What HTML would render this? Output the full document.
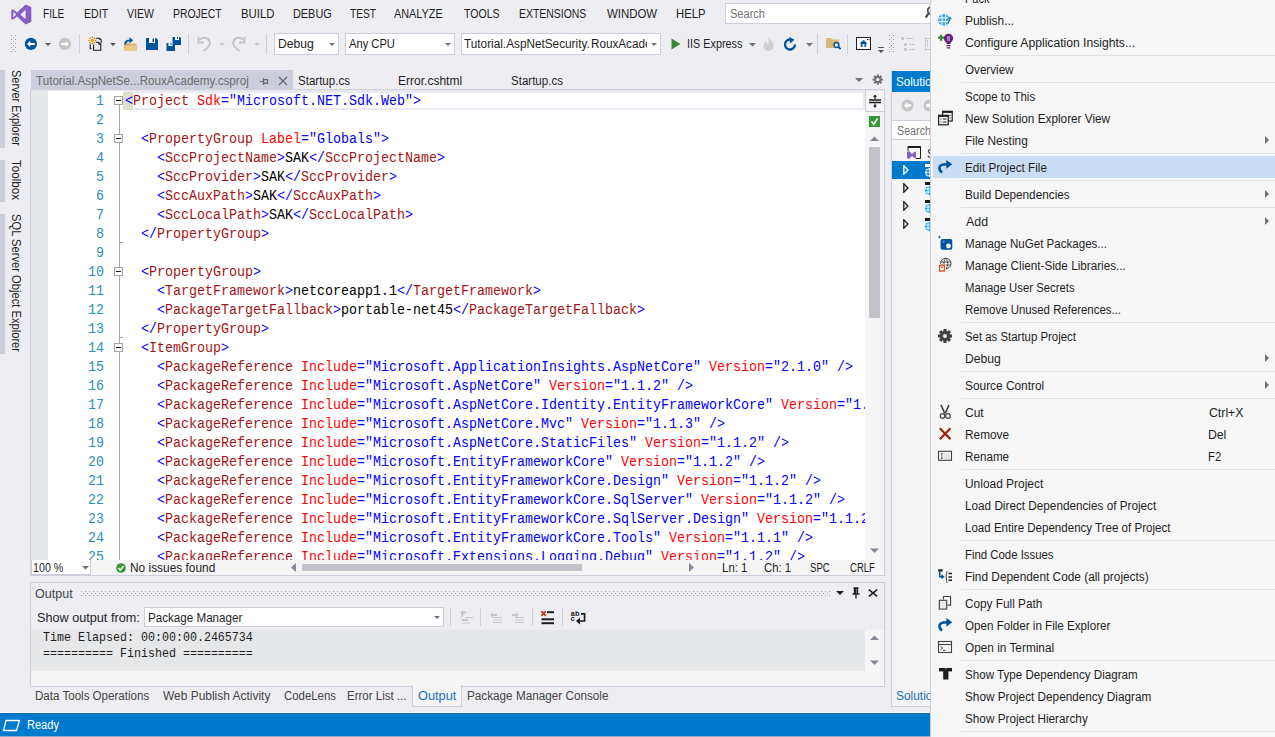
<!DOCTYPE html>
<html><head><meta charset="utf-8"><style>
html,body{margin:0;padding:0;}
body{width:1275px;height:737px;overflow:hidden;position:relative;background:#EEEEF2;font-family:"Liberation Sans",sans-serif;}
body div, body svg{position:absolute;}
.t{white-space:pre;line-height:20px;transform-origin:0 0;}
.m{white-space:pre;font-family:"Liberation Mono",monospace;font-size:13.333px;line-height:19px;transform-origin:0 13px;transform:scaleY(1.1);}
.mo{white-space:pre;font-family:"Liberation Mono",monospace;font-size:11.67px;line-height:15px;color:#1E1E1E;transform-origin:0 10px;transform:scaleY(1.08);}
</style></head><body>
<svg style="position:absolute;left:11px;top:4px;" width="21" height="21" viewBox="0 0 21 21"><path d="M14.6 0.6 L20.3 3.1 V17.9 L14.6 20.4 L6 12.6 L2 15.7 L0.3 14.9 V6.1 L2 5.3 L6 8.4 Z M14.6 5.8 L9.3 10.5 L14.6 15.2 Z M2.4 7.8 V13.2 L5.1 10.5 Z" fill="#865FC5" fill-rule="evenodd"/></svg>
<div class="t" style="left:42.67px;top:4px;font-size:12px;color:#1E1E1E;transform:scaleX(0.8389);">FILE</div>
<div class="t" style="left:83.53px;top:4px;font-size:12px;color:#1E1E1E;transform:scaleX(0.8821);">EDIT</div>
<div class="t" style="left:126.95px;top:4px;font-size:12px;color:#1E1E1E;transform:scaleX(0.8733);">VIEW</div>
<div class="t" style="left:173.15px;top:4px;font-size:12px;color:#1E1E1E;transform:scaleX(0.8677);">PROJECT</div>
<div class="t" style="left:240.77px;top:4px;font-size:12px;color:#1E1E1E;transform:scaleX(0.9472);">BUILD</div>
<div class="t" style="left:292.61px;top:4px;font-size:12px;color:#1E1E1E;transform:scaleX(0.9070);">DEBUG</div>
<div class="t" style="left:349.97px;top:4px;font-size:12px;color:#1E1E1E;transform:scaleX(0.8465);">TEST</div>
<div class="t" style="left:394.18px;top:4px;font-size:12px;color:#1E1E1E;transform:scaleX(0.9050);">ANALYZE</div>
<div class="t" style="left:464.36px;top:4px;font-size:12px;color:#1E1E1E;transform:scaleX(0.8782);">TOOLS</div>
<div class="t" style="left:518.94px;top:4px;font-size:12px;color:#1E1E1E;transform:scaleX(0.8705);">EXTENSIONS</div>
<div class="t" style="left:606.65px;top:4px;font-size:12px;color:#1E1E1E;transform:scaleX(0.9513);">WINDOW</div>
<div class="t" style="left:676.37px;top:4px;font-size:12px;color:#1E1E1E;transform:scaleX(0.9418);">HELP</div>
<div style="left:725px;top:3px;width:206px;height:21px;background:#FFFFFF;border:1px solid #CCCEDB;box-sizing:border-box"></div>
<div class="t" style="left:729.90px;top:4px;font-size:12px;color:#717171;transform:scaleX(0.9210);">Search</div>
<svg style="position:absolute;left:925px;top:6px;" width="10" height="14" viewBox="0 0 10 14"><circle cx="6" cy="4.5" r="3.3" fill="none" stroke="#424242" stroke-width="1.6"/><path d="M3.8 7 L0.8 11.5" stroke="#424242" stroke-width="2.2"/></svg>
<svg style="position:absolute;left:11px;top:35px;" width="5" height="17" viewBox="0 0 5 17"><rect x="0" y="0" width="1" height="1" fill="#A0A0A0"/><rect x="4" y="0" width="1" height="1" fill="#A0A0A0"/><rect x="0" y="4" width="1" height="1" fill="#A0A0A0"/><rect x="4" y="4" width="1" height="1" fill="#A0A0A0"/><rect x="0" y="8" width="1" height="1" fill="#A0A0A0"/><rect x="4" y="8" width="1" height="1" fill="#A0A0A0"/><rect x="0" y="12" width="1" height="1" fill="#A0A0A0"/><rect x="4" y="12" width="1" height="1" fill="#A0A0A0"/><rect x="0" y="16" width="1" height="1" fill="#A0A0A0"/><rect x="4" y="16" width="1" height="1" fill="#A0A0A0"/><rect x="2" y="2" width="1" height="1" fill="#A0A0A0"/><rect x="2" y="6" width="1" height="1" fill="#A0A0A0"/><rect x="2" y="10" width="1" height="1" fill="#A0A0A0"/><rect x="2" y="14" width="1" height="1" fill="#A0A0A0"/></svg>
<svg style="position:absolute;left:24px;top:37px;" width="14" height="14" viewBox="0 0 14 14"><circle cx="6.9" cy="6.9" r="6.1" fill="#00539C"/><path d="M3 6.9 L6.3 3.8 V5.9 H10.8 V7.9 H6.3 V10 Z" fill="#fff"/></svg>
<svg style="position:absolute;left:45px;top:43px;" width="6" height="4" viewBox="0 0 6 4"><path d="M0 0 H6 L3 3 Z" fill="#555"/></svg>
<svg style="position:absolute;left:58px;top:37px;" width="14" height="14" viewBox="0 0 14 14"><circle cx="7" cy="6.9" r="6.1" fill="#C5C5C5"/><path d="M10.9 6.9 L7.6 3.8 V5.9 H3.1 V7.9 H7.6 V10 Z" fill="#fff"/></svg>
<div style="left:79px;top:34px;width:1px;height:20px;background:#CCCEDB;"></div>
<svg style="position:absolute;left:86px;top:34px;" width="20" height="20" viewBox="0 0 20 20"><path d="M7.6 10.8 H12.6 L14.8 13 V16.3 H7.6 Z" fill="#E8E8E8"/><path d="M10 4.2 H13.5 L15.2 5.9 V9" fill="none" stroke="#1E1E1E" stroke-width="1.1"/><path d="M13.3 4 L15.4 6.1 H13.3 Z" fill="#1E1E1E"/><path d="M7.6 10.6 V16.3 H14.8 V10.5 L12.6 8.3 H10" fill="none" stroke="#1E1E1E" stroke-width="1.1"/><path d="M12.4 8.1 L15 10.7 H12.4 Z" fill="#1E1E1E"/><path d="M4.2 10.3 V14.8 H5.6" fill="none" stroke="#1E1E1E" stroke-width="1.1"/><circle cx="6.4" cy="6.4" r="3.6" fill="#FFE9A8" opacity="0.6"/><circle cx="9.60" cy="6.40" r="0.75" fill="#B08018"/><circle cx="8.66" cy="8.66" r="0.75" fill="#B08018"/><circle cx="6.40" cy="9.60" r="0.75" fill="#B08018"/><circle cx="4.14" cy="8.66" r="0.75" fill="#B08018"/><circle cx="3.20" cy="6.40" r="0.75" fill="#B08018"/><circle cx="4.14" cy="4.14" r="0.75" fill="#B08018"/><circle cx="6.40" cy="3.20" r="0.75" fill="#B08018"/><circle cx="8.66" cy="4.14" r="0.75" fill="#B08018"/><circle cx="6.4" cy="6.4" r="1.7" fill="#E0A800"/></svg>
<svg style="position:absolute;left:110px;top:43px;" width="6" height="4" viewBox="0 0 6 4"><path d="M0 0 H6 L3 3 Z" fill="#555"/></svg>
<svg style="position:absolute;left:123px;top:36px;" width="15" height="16" viewBox="0 0 15 16"><path d="M1 6.5 H5.5 L6.5 7.5 H13.5 V15 H1 Z" fill="#DCB67A"/><path d="M1 15 L2.5 10 H14.5 L13.5 15 Z" fill="#E8C98E"/><path d="M2.2 8.5 C2.2 5.5 3.5 4.3 7 4.3" fill="none" stroke="#00539C" stroke-width="1.8"/><path d="M6.5 1 L10 4.3 L6.5 7.6 Z" fill="#00539C"/></svg>
<svg style="position:absolute;left:146px;top:38px;" width="12" height="12" viewBox="0 0 12 12"><path d="M0 0 H10 L12 2 V12 H0 Z" fill="#00539C"/><rect x="3" y="0" width="6" height="5" fill="#fff"/><rect x="6.5" y="0.5" width="1.5" height="3.5" fill="#00539C"/></svg>
<svg style="position:absolute;left:166px;top:36px;" width="16" height="15" viewBox="0 0 16 15"><path d="M6.5 1 H14 L15 2 V9 H6.5 Z" fill="#00539C"/><rect x="9" y="1" width="4" height="3" fill="#fff"/><rect x="11" y="1" width="1" height="2" fill="#00539C"/><path d="M0.5 7 H9 V15 H0.5 Z" fill="#00539C" stroke="#EEEEF2" stroke-width="0"/><rect x="2.5" y="7" width="4" height="3" fill="#fff"/><rect x="4.5" y="7" width="1" height="2" fill="#00539C"/></svg>
<div style="left:188px;top:34px;width:1px;height:20px;background:#CCCEDB;"></div>
<svg style="position:absolute;left:196px;top:35px;" width="16" height="18" viewBox="0 0 16 18"><path d="M3.5 5 C6 1.8 12 2 13.6 6.5 C14.6 9.5 12.5 12.5 7.5 15.8" fill="none" stroke="#C5C5C5" stroke-width="2"/><path d="M2.5 1.8 V7.5 H8" fill="none" stroke="#C5C5C5" stroke-width="2"/></svg>
<svg style="position:absolute;left:219px;top:43px;" width="6" height="4" viewBox="0 0 6 4"><path d="M0 0 H6 L3 3 Z" fill="#C5C5C5"/></svg>
<svg style="position:absolute;left:231px;top:35px;" width="16" height="18" viewBox="0 0 16 18"><g transform="translate(16,0) scale(-1,1)"><path d="M3.5 5 C6 1.8 12 2 13.6 6.5 C14.6 9.5 12.5 12.5 7.5 15.8" fill="none" stroke="#C5C5C5" stroke-width="2"/><path d="M2.5 1.8 V7.5 H8" fill="none" stroke="#C5C5C5" stroke-width="2"/></g></svg>
<svg style="position:absolute;left:254px;top:43px;" width="6" height="4" viewBox="0 0 6 4"><path d="M0 0 H6 L3 3 Z" fill="#C5C5C5"/></svg>
<div style="left:266px;top:34px;width:1px;height:20px;background:#CCCEDB;"></div>
<div style="left:274px;top:33px;width:65px;height:22px;background:#FFFFFF;border:1px solid #CCCEDB;box-sizing:border-box"></div>
<svg style="position:absolute;left:329px;top:43px;" width="6" height="4" viewBox="0 0 6 4"><path d="M0 0 H6 L3 3 Z" fill="#717171"/></svg>
<div class="t" style="left:277.50px;top:33.6px;font-size:12px;color:#1E1E1E;transform:scaleX(1.0118);">Debug</div>
<div style="left:345px;top:33px;width:110px;height:22px;background:#FFFFFF;border:1px solid #CCCEDB;box-sizing:border-box"></div>
<svg style="position:absolute;left:445px;top:43px;" width="6" height="4" viewBox="0 0 6 4"><path d="M0 0 H6 L3 3 Z" fill="#717171"/></svg>
<div class="t" style="left:349.48px;top:33.6px;font-size:12px;color:#1E1E1E;transform:scaleX(0.9298);">Any CPU</div>
<div style="left:461px;top:33px;width:200px;height:22px;background:#FFFFFF;border:1px solid #CCCEDB;box-sizing:border-box"></div>
<svg style="position:absolute;left:651px;top:43px;" width="6" height="4" viewBox="0 0 6 4"><path d="M0 0 H6 L3 3 Z" fill="#717171"/></svg>
<div style="left:462px;top:34px;width:185px;height:20px;overflow:hidden">
<div class="t" style="left:2.44px;top:-0.40000000000000036px;font-size:12px;color:#1E1E1E;transform:scaleX(0.9819);">Tutorial.AspNetSecurity.</div>
<div class="t" style="left:129.44px;top:-0.40000000000000036px;font-size:12px;color:#1E1E1E;transform:scaleX(0.9737);">RouxAcademy</div>
</div>
<svg style="position:absolute;left:671px;top:38px;" width="10" height="12" viewBox="0 0 10 12"><path d="M0.5 0.5 L9.5 6 L0.5 11.5 Z" fill="#388A34"/></svg>
<div class="t" style="left:687.00px;top:33.8px;font-size:12px;color:#1E1E1E;transform:scaleX(0.9028);">IIS Express</div>
<svg style="position:absolute;left:749px;top:43px;" width="7" height="4" viewBox="0 0 7 4"><path d="M0 0 H7 L3.5 3.5 Z" fill="#717171"/></svg>
<svg style="position:absolute;left:763px;top:37px;" width="11" height="14" viewBox="0 0 11 14"><path d="M5.5 0 C9 4 11 6 10.5 9.5 C10 12.5 8 14 5.5 14 C3 14 0.5 12.5 0.5 9.5 C0.5 7 2 6 3 4 C3.5 6 4 7 5 7 C6 5 6 3 5.5 0 Z" fill="#CFCFCF"/></svg>
<svg style="position:absolute;left:783px;top:37px;" width="15" height="15" viewBox="0 0 15 15"><path d="M12 7.5 A5 5 0 1 1 8 2.6" fill="none" stroke="#00539C" stroke-width="2.3"/><path d="M6.5 0 L11.5 2.8 L7 6.5 Z" fill="#00539C"/></svg>
<svg style="position:absolute;left:806px;top:43px;" width="7" height="4" viewBox="0 0 7 4"><path d="M0 0 H7 L3.5 3.5 Z" fill="#717171"/></svg>
<div style="left:817px;top:34px;width:1px;height:20px;background:#CCCEDB;"></div>
<svg style="position:absolute;left:826px;top:37px;" width="15" height="13" viewBox="0 0 15 13"><path d="M0 1 H5 L6 2.5 H13 V11 H0 Z" fill="#DCB67A"/><circle cx="10.5" cy="8" r="2.4" fill="#fff" stroke="#00539C" stroke-width="1.5"/><path d="M12 9.5 L14.5 12" stroke="#00539C" stroke-width="1.8"/></svg>
<div style="left:847px;top:34px;width:1px;height:20px;background:#CCCEDB;"></div>
<svg style="position:absolute;left:856px;top:37px;" width="15" height="13" viewBox="0 0 15 13"><rect x="0.5" y="0.5" width="14" height="12" fill="#fff" stroke="#1E1E1E"/><path d="M7.5 3 L3.5 6.5 H4.8 V10 H10.2 V6.5 H11.5 Z" fill="#00539C"/><rect x="6.5" y="7" width="2" height="3" fill="#fff"/><rect x="11" y="2" width="1" height="1" fill="#1E1E1E"/><rect x="12.5" y="2" width="1" height="1" fill="#1E1E1E"/></svg>
<svg style="position:absolute;left:878px;top:47px;" width="7" height="8" viewBox="0 0 7 8"><rect x="0" y="0" width="6" height="1" fill="#555"/><path d="M0 3 H6 L3 6 Z" fill="#555"/></svg>
<svg style="position:absolute;left:889px;top:35px;" width="5" height="17" viewBox="0 0 5 17"><rect x="0" y="0" width="1" height="1" fill="#A0A0A0"/><rect x="4" y="0" width="1" height="1" fill="#A0A0A0"/><rect x="0" y="4" width="1" height="1" fill="#A0A0A0"/><rect x="4" y="4" width="1" height="1" fill="#A0A0A0"/><rect x="0" y="8" width="1" height="1" fill="#A0A0A0"/><rect x="4" y="8" width="1" height="1" fill="#A0A0A0"/><rect x="0" y="12" width="1" height="1" fill="#A0A0A0"/><rect x="4" y="12" width="1" height="1" fill="#A0A0A0"/><rect x="0" y="16" width="1" height="1" fill="#A0A0A0"/><rect x="4" y="16" width="1" height="1" fill="#A0A0A0"/><rect x="2" y="2" width="1" height="1" fill="#A0A0A0"/><rect x="2" y="6" width="1" height="1" fill="#A0A0A0"/><rect x="2" y="10" width="1" height="1" fill="#A0A0A0"/><rect x="2" y="14" width="1" height="1" fill="#A0A0A0"/></svg>
<svg style="position:absolute;left:901px;top:37px;" width="15" height="15" viewBox="0 0 15 15"><rect x="0" y="0" width="3" height="3" fill="#C8C8C8"/><rect x="5" y="1" width="7.5" height="1" fill="#C8C8C8"/><rect x="3" y="6" width="3" height="3" fill="#C8C8C8"/><rect x="8" y="7" width="6" height="1" fill="#C8C8C8"/><rect x="3" y="11" width="3" height="3" fill="#C8C8C8"/><rect x="8" y="12" width="6" height="1" fill="#C8C8C8"/></svg>
<div style="left:925px;top:38px;width:6px;height:12px;background:#EEEEF2;border:1px solid #C8C8C8;box-sizing:border-box"></div>
<svg style="position:absolute;left:927px;top:40px;" width="2" height="8" viewBox="0 0 2 8"><rect x="0" y="0" width="1" height="1" fill="#B0B0B0"/><rect x="0" y="2" width="1" height="1" fill="#B0B0B0"/><rect x="0" y="4" width="1" height="1" fill="#B0B0B0"/><rect x="0" y="6" width="1" height="1" fill="#B0B0B0"/></svg>
<div style="left:0px;top:70px;width:5px;height:78px;background:#CCCEDB;"></div>
<div class="t" style="left:0px;top:70px;font-size:12px;color:#1E1E1E;transform-origin:0 0;transform:translate(26px,0px) rotate(90deg) scaleX(0.9117)">Server Explorer</div>
<div style="left:0px;top:160px;width:5px;height:42px;background:#CCCEDB;"></div>
<div class="t" style="left:0px;top:160px;font-size:12px;color:#1E1E1E;transform-origin:0 0;transform:translate(26px,0px) rotate(90deg) scaleX(0.9671)">Toolbox</div>
<div style="left:0px;top:214px;width:5px;height:140px;background:#CCCEDB;"></div>
<div class="t" style="left:0px;top:214px;font-size:12px;color:#1E1E1E;transform-origin:0 0;transform:translate(26px,0px) rotate(90deg) scaleX(0.9309)">SQL Server Object Explorer</div>
<div style="left:31px;top:70px;width:262px;height:19px;background:#CCCEDB;"></div>
<div class="t" style="left:35.94px;top:71px;font-size:12px;color:#6D6D6D;transform:scaleX(0.9696);">Tutorial.AspNetSe...RouxAcademy.csproj</div>
<svg style="position:absolute;left:259px;top:77px;" width="10" height="9" viewBox="0 0 10 9"><path d="M0.8 4.5 H4.5" stroke="#6D6D6D" stroke-width="1.1"/><path d="M4.5 1 V8" stroke="#6D6D6D" stroke-width="1.3"/><path d="M4.5 2.6 H8.6 V6.4 H4.5" fill="none" stroke="#6D6D6D" stroke-width="1.1"/><rect x="4.5" y="5.6" width="4.6" height="1.4" fill="#6D6D6D"/></svg>
<svg style="position:absolute;left:278px;top:76px;" width="10" height="10" viewBox="0 0 10 10"><path d="M1 1 L9 9 M9 1 L1 9" stroke="#6D6D6D" stroke-width="1.5"/></svg>
<div class="t" style="left:297.98px;top:70.8px;font-size:12px;color:#1E1E1E;transform:scaleX(0.9614);">Startup.cs</div>
<div class="t" style="left:398.01px;top:70.8px;font-size:12px;color:#1E1E1E;transform:scaleX(1.0019);">Error.cshtml</div>
<div class="t" style="left:511.48px;top:70.8px;font-size:12px;color:#1E1E1E;transform:scaleX(0.9614);">Startup.cs</div>
<svg style="position:absolute;left:855px;top:78px;" width="8" height="5" viewBox="0 0 8 5"><path d="M0 0 H8 L4 4 Z" fill="#717171"/></svg>
<svg style="position:absolute;left:872px;top:74px;" width="12" height="12" viewBox="0 0 12 12"><g transform="translate(5.8,5.6)"><circle r="3.6" fill="#717171"/><rect x="-1" y="-5.2" width="2" height="2.5" fill="#717171" transform="rotate(0)"/><rect x="-1" y="-5.2" width="2" height="2.5" fill="#717171" transform="rotate(45)"/><rect x="-1" y="-5.2" width="2" height="2.5" fill="#717171" transform="rotate(90)"/><rect x="-1" y="-5.2" width="2" height="2.5" fill="#717171" transform="rotate(135)"/><rect x="-1" y="-5.2" width="2" height="2.5" fill="#717171" transform="rotate(180)"/><rect x="-1" y="-5.2" width="2" height="2.5" fill="#717171" transform="rotate(225)"/><rect x="-1" y="-5.2" width="2" height="2.5" fill="#717171" transform="rotate(270)"/><rect x="-1" y="-5.2" width="2" height="2.5" fill="#717171" transform="rotate(315)"/><circle r="1.7" fill="#EEEEF2"/></g></svg>
<div style="left:31px;top:89px;width:854px;height:1px;background:#CFD0DA;"></div>
<div style="left:31px;top:90px;width:854px;height:1px;background:#E4E5EC;"></div>
<div style="left:30px;top:89px;width:1px;height:487px;background:#CCCEDB;"></div>
<div style="left:884px;top:89px;width:1px;height:487px;background:#CCCEDB;"></div>
<div style="left:31px;top:91px;width:17px;height:469px;background:#E6E7E8;"></div>
<div style="left:48px;top:91px;width:817px;height:469px;background:#FFFFFF;"></div>
<div style="left:865px;top:91px;width:19px;height:469px;background:#F5F5F5;"></div>
<div style="left:865px;top:91px;width:1px;height:21px;background:#CCCEDB;"></div>
<div style="left:866px;top:111px;width:18px;height:1px;background:#CCCEDB;"></div>
<svg style="position:absolute;left:868px;top:94px;" width="14" height="14" viewBox="0 0 14 14"><path d="M1 6 H13 M1 8.5 H13" stroke="#1E1E1E" stroke-width="1.3"/><path d="M7 1 V5 M7 9.5 V13" stroke="#1E1E1E" stroke-width="1.2"/><path d="M5 3 L7 0.5 L9 3 Z M5 11.5 L7 14 L9 11.5 Z" fill="#1E1E1E"/></svg>
<svg style="position:absolute;left:869px;top:116px;" width="11" height="11" viewBox="0 0 11 11"><rect width="11" height="11" fill="#339933"/><path d="M2.5 5.5 L4.8 8.3 L8.5 2.5" fill="none" stroke="#fff" stroke-width="1.6"/></svg>
<svg style="position:absolute;left:870px;top:136px;" width="9" height="6" viewBox="0 0 9 6"><path d="M0 5 L4.5 0.5 L9 5 Z" fill="#868999"/></svg>
<div style="left:869px;top:147px;width:11px;height:171px;background:#C2C3C9;"></div>
<svg style="position:absolute;left:870px;top:548px;" width="9" height="6" viewBox="0 0 9 6"><path d="M0 0.5 L4.5 5 L9 0.5 Z" fill="#868999"/></svg>
<div style="left:123px;top:91px;width:742px;height:19px;background:transparent;border:2px solid #EAEAF2;box-sizing:border-box"></div>
<div style="left:123px;top:92px;width:10px;height:18px;background:#DBE0CC;"></div>
<div style="left:119px;top:105px;width:1px;height:455px;background:#A5A5A5;"></div>
<svg style="position:absolute;left:114px;top:96px;" width="9" height="9" viewBox="0 0 9 9"><rect x="0.5" y="0.5" width="8" height="8" fill="#fff" stroke="#A5A5A5"/><path d="M2 4.5 H7" stroke="#1E1E1E"/></svg>
<svg style="position:absolute;left:114px;top:134px;" width="9" height="9" viewBox="0 0 9 9"><rect x="0.5" y="0.5" width="8" height="8" fill="#fff" stroke="#A5A5A5"/><path d="M2 4.5 H7" stroke="#1E1E1E"/></svg>
<svg style="position:absolute;left:114px;top:267px;" width="9" height="9" viewBox="0 0 9 9"><rect x="0.5" y="0.5" width="8" height="8" fill="#fff" stroke="#A5A5A5"/><path d="M2 4.5 H7" stroke="#1E1E1E"/></svg>
<svg style="position:absolute;left:114px;top:343px;" width="9" height="9" viewBox="0 0 9 9"><rect x="0.5" y="0.5" width="8" height="8" fill="#fff" stroke="#A5A5A5"/><path d="M2 4.5 H7" stroke="#1E1E1E"/></svg>
<div style="left:120px;top:242px;width:3px;height:1px;background:#A5A5A5;"></div>
<div style="left:120px;top:337px;width:3px;height:1px;background:#A5A5A5;"></div>
<div style="left:31px;top:560px;width:853px;height:15px;background:#F5F5F5;"></div>
<div style="left:30px;top:575px;width:855px;height:1px;background:#CCCEDB;"></div>
<div style="left:31px;top:560px;width:60px;height:15px;background:#FFFFFF;border:1px solid #CCCEDB;border-top:none;box-sizing:border-box"></div>
<div class="t" style="left:32.68px;top:558px;font-size:12px;color:#1E1E1E;transform:scaleX(0.8934);">100 %</div>
<svg style="position:absolute;left:82px;top:566px;" width="7" height="4" viewBox="0 0 7 4"><path d="M0 0 H7 L3.5 3.5 Z" fill="#717171"/></svg>
<svg style="position:absolute;left:116px;top:563px;" width="10" height="10" viewBox="0 0 10 10"><circle cx="5" cy="5" r="4.8" fill="#339933"/><path d="M2.5 5 L4.3 7 L7.5 3" fill="none" stroke="#fff" stroke-width="1.5"/></svg>
<div class="t" style="left:130.02px;top:558px;font-size:12px;color:#1E1E1E;transform:scaleX(0.9906);">No issues found</div>
<svg style="position:absolute;left:291px;top:563px;" width="5" height="9" viewBox="0 0 5 9"><path d="M5 0 V9 L0 4.5 Z" fill="#868999"/></svg>
<div style="left:302px;top:564px;width:280px;height:7px;background:#C2C3C9;"></div>
<svg style="position:absolute;left:689px;top:563px;" width="5" height="9" viewBox="0 0 5 9"><path d="M0 0 V9 L5 4.5 Z" fill="#868999"/></svg>
<div class="t" style="left:722.06px;top:558px;font-size:12px;color:#1E1E1E;transform:scaleX(0.9554);">Ln: 1</div>
<div class="t" style="left:764.42px;top:558px;font-size:12px;color:#1E1E1E;transform:scaleX(0.9459);">Ch: 1</div>
<div class="t" style="left:809.56px;top:558px;font-size:12px;color:#1E1E1E;transform:scaleX(0.8026);">SPC</div>
<div class="t" style="left:849.52px;top:558px;font-size:12px;color:#1E1E1E;transform:scaleX(0.7935);">CRLF</div>
<div style="left:48px;top:91px;width:817px;height:469px;overflow:hidden">
<div class="m" style="left:48px;top:1px;color:#2B91AF">1</div>
<div class="m" style="left:77px;top:1px"><span style="color:#0000FF">&lt;</span><span style="color:#A31515">Project</span><span style="color:#000000"> </span><span style="color:#FF0000">Sdk</span><span style="color:#0000FF">=</span><span style="color:#0000FF">&quot;Microsoft.NET.Sdk.Web&quot;</span><span style="color:#0000FF">&gt;</span></div>
<div class="m" style="left:48px;top:20px;color:#2B91AF">2</div>
<div class="m" style="left:77px;top:20px"></div>
<div class="m" style="left:48px;top:39px;color:#2B91AF">3</div>
<div class="m" style="left:77px;top:39px"><span style="color:#000000">  </span><span style="color:#0000FF">&lt;</span><span style="color:#A31515">PropertyGroup</span><span style="color:#000000"> </span><span style="color:#FF0000">Label</span><span style="color:#0000FF">=</span><span style="color:#0000FF">&quot;Globals&quot;</span><span style="color:#0000FF">&gt;</span></div>
<div class="m" style="left:48px;top:58px;color:#2B91AF">4</div>
<div class="m" style="left:77px;top:58px"><span style="color:#000000">    </span><span style="color:#0000FF">&lt;</span><span style="color:#A31515">SccProjectName</span><span style="color:#0000FF">&gt;</span><span style="color:#000000">SAK</span><span style="color:#0000FF">&lt;/</span><span style="color:#A31515">SccProjectName</span><span style="color:#0000FF">&gt;</span></div>
<div class="m" style="left:48px;top:77px;color:#2B91AF">5</div>
<div class="m" style="left:77px;top:77px"><span style="color:#000000">    </span><span style="color:#0000FF">&lt;</span><span style="color:#A31515">SccProvider</span><span style="color:#0000FF">&gt;</span><span style="color:#000000">SAK</span><span style="color:#0000FF">&lt;/</span><span style="color:#A31515">SccProvider</span><span style="color:#0000FF">&gt;</span></div>
<div class="m" style="left:48px;top:96px;color:#2B91AF">6</div>
<div class="m" style="left:77px;top:96px"><span style="color:#000000">    </span><span style="color:#0000FF">&lt;</span><span style="color:#A31515">SccAuxPath</span><span style="color:#0000FF">&gt;</span><span style="color:#000000">SAK</span><span style="color:#0000FF">&lt;/</span><span style="color:#A31515">SccAuxPath</span><span style="color:#0000FF">&gt;</span></div>
<div class="m" style="left:48px;top:115px;color:#2B91AF">7</div>
<div class="m" style="left:77px;top:115px"><span style="color:#000000">    </span><span style="color:#0000FF">&lt;</span><span style="color:#A31515">SccLocalPath</span><span style="color:#0000FF">&gt;</span><span style="color:#000000">SAK</span><span style="color:#0000FF">&lt;/</span><span style="color:#A31515">SccLocalPath</span><span style="color:#0000FF">&gt;</span></div>
<div class="m" style="left:48px;top:134px;color:#2B91AF">8</div>
<div class="m" style="left:77px;top:134px"><span style="color:#000000">  </span><span style="color:#0000FF">&lt;/</span><span style="color:#A31515">PropertyGroup</span><span style="color:#0000FF">&gt;</span></div>
<div class="m" style="left:48px;top:153px;color:#2B91AF">9</div>
<div class="m" style="left:77px;top:153px"></div>
<div class="m" style="left:40px;top:172px;color:#2B91AF">10</div>
<div class="m" style="left:77px;top:172px"><span style="color:#000000">  </span><span style="color:#0000FF">&lt;</span><span style="color:#A31515">PropertyGroup</span><span style="color:#0000FF">&gt;</span></div>
<div class="m" style="left:40px;top:191px;color:#2B91AF">11</div>
<div class="m" style="left:77px;top:191px"><span style="color:#000000">    </span><span style="color:#0000FF">&lt;</span><span style="color:#A31515">TargetFramework</span><span style="color:#0000FF">&gt;</span><span style="color:#000000">netcoreapp1.1</span><span style="color:#0000FF">&lt;/</span><span style="color:#A31515">TargetFramework</span><span style="color:#0000FF">&gt;</span></div>
<div class="m" style="left:40px;top:210px;color:#2B91AF">12</div>
<div class="m" style="left:77px;top:210px"><span style="color:#000000">    </span><span style="color:#0000FF">&lt;</span><span style="color:#A31515">PackageTargetFallback</span><span style="color:#0000FF">&gt;</span><span style="color:#000000">portable-net45</span><span style="color:#0000FF">&lt;/</span><span style="color:#A31515">PackageTargetFallback</span><span style="color:#0000FF">&gt;</span></div>
<div class="m" style="left:40px;top:229px;color:#2B91AF">13</div>
<div class="m" style="left:77px;top:229px"><span style="color:#000000">  </span><span style="color:#0000FF">&lt;/</span><span style="color:#A31515">PropertyGroup</span><span style="color:#0000FF">&gt;</span></div>
<div class="m" style="left:40px;top:248px;color:#2B91AF">14</div>
<div class="m" style="left:77px;top:248px"><span style="color:#000000">  </span><span style="color:#0000FF">&lt;</span><span style="color:#A31515">ItemGroup</span><span style="color:#0000FF">&gt;</span></div>
<div class="m" style="left:40px;top:267px;color:#2B91AF">15</div>
<div class="m" style="left:77px;top:267px"><span style="color:#000000">    </span><span style="color:#0000FF">&lt;</span><span style="color:#A31515">PackageReference</span><span style="color:#000000"> </span><span style="color:#FF0000">Include</span><span style="color:#0000FF">=</span><span style="color:#0000FF">&quot;Microsoft.ApplicationInsights.AspNetCore&quot;</span><span style="color:#000000"> </span><span style="color:#FF0000">Version</span><span style="color:#0000FF">=</span><span style="color:#0000FF">&quot;2.1.0&quot;</span><span style="color:#000000"> </span><span style="color:#0000FF">/&gt;</span></div>
<div class="m" style="left:40px;top:286px;color:#2B91AF">16</div>
<div class="m" style="left:77px;top:286px"><span style="color:#000000">    </span><span style="color:#0000FF">&lt;</span><span style="color:#A31515">PackageReference</span><span style="color:#000000"> </span><span style="color:#FF0000">Include</span><span style="color:#0000FF">=</span><span style="color:#0000FF">&quot;Microsoft.AspNetCore&quot;</span><span style="color:#000000"> </span><span style="color:#FF0000">Version</span><span style="color:#0000FF">=</span><span style="color:#0000FF">&quot;1.1.2&quot;</span><span style="color:#000000"> </span><span style="color:#0000FF">/&gt;</span></div>
<div class="m" style="left:40px;top:305px;color:#2B91AF">17</div>
<div class="m" style="left:77px;top:305px"><span style="color:#000000">    </span><span style="color:#0000FF">&lt;</span><span style="color:#A31515">PackageReference</span><span style="color:#000000"> </span><span style="color:#FF0000">Include</span><span style="color:#0000FF">=</span><span style="color:#0000FF">&quot;Microsoft.AspNetCore.Identity.EntityFrameworkCore&quot;</span><span style="color:#000000"> </span><span style="color:#FF0000">Version</span><span style="color:#0000FF">=</span><span style="color:#0000FF">&quot;1.1.2&quot;</span><span style="color:#000000"> </span><span style="color:#0000FF">/&gt;</span></div>
<div class="m" style="left:40px;top:324px;color:#2B91AF">18</div>
<div class="m" style="left:77px;top:324px"><span style="color:#000000">    </span><span style="color:#0000FF">&lt;</span><span style="color:#A31515">PackageReference</span><span style="color:#000000"> </span><span style="color:#FF0000">Include</span><span style="color:#0000FF">=</span><span style="color:#0000FF">&quot;Microsoft.AspNetCore.Mvc&quot;</span><span style="color:#000000"> </span><span style="color:#FF0000">Version</span><span style="color:#0000FF">=</span><span style="color:#0000FF">&quot;1.1.3&quot;</span><span style="color:#000000"> </span><span style="color:#0000FF">/&gt;</span></div>
<div class="m" style="left:40px;top:343px;color:#2B91AF">19</div>
<div class="m" style="left:77px;top:343px"><span style="color:#000000">    </span><span style="color:#0000FF">&lt;</span><span style="color:#A31515">PackageReference</span><span style="color:#000000"> </span><span style="color:#FF0000">Include</span><span style="color:#0000FF">=</span><span style="color:#0000FF">&quot;Microsoft.AspNetCore.StaticFiles&quot;</span><span style="color:#000000"> </span><span style="color:#FF0000">Version</span><span style="color:#0000FF">=</span><span style="color:#0000FF">&quot;1.1.2&quot;</span><span style="color:#000000"> </span><span style="color:#0000FF">/&gt;</span></div>
<div class="m" style="left:40px;top:362px;color:#2B91AF">20</div>
<div class="m" style="left:77px;top:362px"><span style="color:#000000">    </span><span style="color:#0000FF">&lt;</span><span style="color:#A31515">PackageReference</span><span style="color:#000000"> </span><span style="color:#FF0000">Include</span><span style="color:#0000FF">=</span><span style="color:#0000FF">&quot;Microsoft.EntityFrameworkCore&quot;</span><span style="color:#000000"> </span><span style="color:#FF0000">Version</span><span style="color:#0000FF">=</span><span style="color:#0000FF">&quot;1.1.2&quot;</span><span style="color:#000000"> </span><span style="color:#0000FF">/&gt;</span></div>
<div class="m" style="left:40px;top:381px;color:#2B91AF">21</div>
<div class="m" style="left:77px;top:381px"><span style="color:#000000">    </span><span style="color:#0000FF">&lt;</span><span style="color:#A31515">PackageReference</span><span style="color:#000000"> </span><span style="color:#FF0000">Include</span><span style="color:#0000FF">=</span><span style="color:#0000FF">&quot;Microsoft.EntityFrameworkCore.Design&quot;</span><span style="color:#000000"> </span><span style="color:#FF0000">Version</span><span style="color:#0000FF">=</span><span style="color:#0000FF">&quot;1.1.2&quot;</span><span style="color:#000000"> </span><span style="color:#0000FF">/&gt;</span></div>
<div class="m" style="left:40px;top:400px;color:#2B91AF">22</div>
<div class="m" style="left:77px;top:400px"><span style="color:#000000">    </span><span style="color:#0000FF">&lt;</span><span style="color:#A31515">PackageReference</span><span style="color:#000000"> </span><span style="color:#FF0000">Include</span><span style="color:#0000FF">=</span><span style="color:#0000FF">&quot;Microsoft.EntityFrameworkCore.SqlServer&quot;</span><span style="color:#000000"> </span><span style="color:#FF0000">Version</span><span style="color:#0000FF">=</span><span style="color:#0000FF">&quot;1.1.2&quot;</span><span style="color:#000000"> </span><span style="color:#0000FF">/&gt;</span></div>
<div class="m" style="left:40px;top:419px;color:#2B91AF">23</div>
<div class="m" style="left:77px;top:419px"><span style="color:#000000">    </span><span style="color:#0000FF">&lt;</span><span style="color:#A31515">PackageReference</span><span style="color:#000000"> </span><span style="color:#FF0000">Include</span><span style="color:#0000FF">=</span><span style="color:#0000FF">&quot;Microsoft.EntityFrameworkCore.SqlServer.Design&quot;</span><span style="color:#000000"> </span><span style="color:#FF0000">Version</span><span style="color:#0000FF">=</span><span style="color:#0000FF">&quot;1.1.2&quot;</span><span style="color:#000000"> </span><span style="color:#0000FF">/&gt;</span></div>
<div class="m" style="left:40px;top:438px;color:#2B91AF">24</div>
<div class="m" style="left:77px;top:438px"><span style="color:#000000">    </span><span style="color:#0000FF">&lt;</span><span style="color:#A31515">PackageReference</span><span style="color:#000000"> </span><span style="color:#FF0000">Include</span><span style="color:#0000FF">=</span><span style="color:#0000FF">&quot;Microsoft.EntityFrameworkCore.Tools&quot;</span><span style="color:#000000"> </span><span style="color:#FF0000">Version</span><span style="color:#0000FF">=</span><span style="color:#0000FF">&quot;1.1.1&quot;</span><span style="color:#000000"> </span><span style="color:#0000FF">/&gt;</span></div>
<div class="m" style="left:40px;top:457px;color:#2B91AF">25</div>
<div class="m" style="left:77px;top:457px"><span style="color:#000000">    </span><span style="color:#0000FF">&lt;</span><span style="color:#A31515">PackageReference</span><span style="color:#000000"> </span><span style="color:#FF0000">Include</span><span style="color:#0000FF">=</span><span style="color:#0000FF">&quot;Microsoft.Extensions.Logging.Debug&quot;</span><span style="color:#000000"> </span><span style="color:#FF0000">Version</span><span style="color:#0000FF">=</span><span style="color:#0000FF">&quot;1.1.2&quot;</span><span style="color:#000000"> </span><span style="color:#0000FF">/&gt;</span></div>
</div>
<div style="left:30px;top:582px;width:855px;height:105px;background:#F5F5F5;border:1px solid #CCCEDB;box-sizing:border-box"></div>
<div style="left:31px;top:583px;width:853px;height:47px;background:#EEEEF2;"></div>
<div class="t" style="left:35.41px;top:584px;font-size:12px;color:#444444;transform:scaleX(1.0462);">Output</div>
<svg style="position:absolute;left:81px;top:591px;" width="749" height="5" viewBox="0 0 749 5"><defs><pattern id="dp" width="4" height="4" patternUnits="userSpaceOnUse"><rect x="0" y="0" width="1" height="1" fill="#A8A8B0"/><rect x="2" y="2" width="1" height="1" fill="#A8A8B0"/></pattern></defs><rect width="749" height="5" fill="url(#dp)"/></svg>
<svg style="position:absolute;left:836px;top:591px;" width="8" height="5" viewBox="0 0 8 5"><path d="M0 0 H8 L4 4 Z" fill="#1E1E1E"/></svg>
<svg style="position:absolute;left:852px;top:587px;" width="8" height="12" viewBox="0 0 8 12"><path d="M1.5 1 H6.5 M2.5 1 V7 H5.5 V1 M0.5 7 H7.5 M4 7 V11.5" fill="none" stroke="#1E1E1E" stroke-width="1.3"/><rect x="2.5" y="1" width="2" height="6" fill="#1E1E1E"/></svg>
<svg style="position:absolute;left:868px;top:589px;" width="10" height="8" viewBox="0 0 10 8"><path d="M0.8 0.6 L9.2 7.4 M9.2 0.6 L0.8 7.4" stroke="#1E1E1E" stroke-width="1.5"/></svg>
<div class="t" style="left:37.43px;top:607.5px;font-size:12px;color:#1E1E1E;transform:scaleX(1.0549);">Show output from:</div>
<div style="left:144px;top:607px;width:300px;height:20px;background:#FFFFFF;border:1px solid #CCCEDB;box-sizing:border-box"></div>
<svg style="position:absolute;left:434px;top:616px;" width="6" height="4" viewBox="0 0 6 4"><path d="M0 0 H6 L3 3 Z" fill="#717171"/></svg>
<div class="t" style="left:147.65px;top:608px;font-size:12px;color:#1E1E1E;transform:scaleX(0.9687);">Package Manager</div>
<div style="left:450px;top:608px;width:1px;height:18px;background:#CCCEDB;"></div>
<svg style="position:absolute;left:459px;top:610px;" width="15" height="14" viewBox="0 0 15 14"><path d="M3 7 C3 3 5 2 7 2.5" fill="none" stroke="#C5C5C5" stroke-width="1.6"/><path d="M4 0 V5 L1 2.5 Z" fill="#C5C5C5"/><rect x="6" y="7" width="8" height="1" fill="#C5C5C5"/><rect x="3" y="9" width="6" height="2" fill="#C5C5C5"/><rect x="3" y="12.5" width="8" height="1" fill="#C5C5C5"/></svg>
<div style="left:480px;top:608px;width:1px;height:18px;background:#CCCEDB;"></div>
<svg style="position:absolute;left:490px;top:612px;" width="12" height="11" viewBox="0 0 12 11"><path d="M0 3 L3 0 V2 H7 V4 H3 V6 Z" fill="#C5C5C5"/><rect x="3" y="5" width="9" height="1" fill="#C5C5C5"/><rect x="3" y="7.5" width="9" height="1" fill="#C5C5C5"/><rect x="3" y="10" width="9" height="1" fill="#C5C5C5"/></svg>
<svg style="position:absolute;left:512px;top:612px;" width="12" height="11" viewBox="0 0 12 11"><path d="M7 3 L4 0 V2 H0 V4 H4 V6 Z" fill="#C5C5C5"/><rect x="3" y="5" width="9" height="1" fill="#C5C5C5"/><rect x="3" y="7.5" width="9" height="1" fill="#C5C5C5"/><rect x="3" y="10" width="9" height="1" fill="#C5C5C5"/></svg>
<div style="left:532px;top:608px;width:1px;height:18px;background:#CCCEDB;"></div>
<svg style="position:absolute;left:540px;top:610px;" width="15" height="15" viewBox="0 0 15 15"><path d="M1.2 1.2 L5.8 5.8 M5.8 1.2 L1.2 5.8" stroke="#C8321E" stroke-width="1.7"/><rect x="7" y="1.2" width="7" height="2" fill="#1E1E1E"/><rect x="1.5" y="8.3" width="12.5" height="2" fill="#1E1E1E"/><rect x="1.5" y="12.2" width="12.5" height="2" fill="#1E1E1E"/></svg>
<div style="left:562px;top:608px;width:1px;height:18px;background:#CCCEDB;"></div>
<svg style="position:absolute;left:570px;top:610px;" width="17" height="15" viewBox="0 0 17 15"><text x="0.5" y="6.3" font-family="Liberation Mono" font-weight="bold" font-size="7.5" fill="#1E1E1E">ab</text><text x="0.5" y="10.8" font-family="Liberation Mono" font-weight="bold" font-size="7.5" fill="#1E1E1E">c</text><path d="M11 3.8 H14.6 V11 H8.5" fill="none" stroke="#1E1E1E" stroke-width="1.7"/><path d="M10 7.5 L6 11 L10 14.5 Z" fill="#1E1E1E"/></svg>
<div style="left:31px;top:630px;width:834px;height:41px;background:#E6E7E8;"></div>
<div class="mo" style="left:43px;top:631px">Time Elapsed: 00:00:00.2465734
========== Finished ==========</div>
<svg style="position:absolute;left:870px;top:635px;" width="9" height="6" viewBox="0 0 9 6"><path d="M0 5 L4.5 0.5 L9 5 Z" fill="#868999"/></svg>
<svg style="position:absolute;left:870px;top:660px;" width="9" height="6" viewBox="0 0 9 6"><path d="M0 0.5 L4.5 5 L9 0.5 Z" fill="#868999"/></svg>
<div class="t" style="left:35.45px;top:686px;font-size:12px;color:#444444;transform:scaleX(0.9634);">Data Tools Operations</div>
<div class="t" style="left:163.35px;top:686px;font-size:12px;color:#444444;transform:scaleX(0.9961);">Web Publish Activity</div>
<div class="t" style="left:284.32px;top:686px;font-size:12px;color:#444444;transform:scaleX(0.9503);">CodeLens</div>
<div class="t" style="left:347.46px;top:686px;font-size:12px;color:#444444;transform:scaleX(0.9578);">Error List ...</div>
<div style="left:412px;top:685px;width:50px;height:22px;background:#F5F5F5;border:1px solid #CCCEDB;border-top:none;box-sizing:border-box"></div>
<div class="t" style="left:417.59px;top:686px;font-size:12px;color:#1C6FB5;transform:scaleX(1.0660);">Output</div>
<div class="t" style="left:467.44px;top:686px;font-size:12px;color:#444444;transform:scaleX(0.9774);">Package Manager Console</div>
<div style="left:0px;top:713px;width:930px;height:24px;background:#007ACC;"></div>
<div style="left:0px;top:713px;width:930px;height:1px;background:#1A6CAA;"></div>
<div style="left:0px;top:712px;width:930px;height:1px;background:#F2FAFF;"></div>
<svg style="position:absolute;left:2px;top:719px;" width="19" height="13" viewBox="0 0 19 13"><path d="M4 1.5 H17.5 L14.5 11.5 H1.5 Z" fill="none" stroke="#fff" stroke-width="1.3"/></svg>
<div class="t" style="left:26.89px;top:715px;font-size:12px;color:#FFFFFF;transform:scaleX(0.9204);">Ready</div>
<div style="left:0px;top:736px;width:930px;height:1px;background:#96AACC;"></div>
<div style="left:891px;top:71px;width:40px;height:636px;background:#F5F5F5;border-left:1px solid #CCCEDB;border-bottom:1px solid #CCCEDB;box-sizing:border-box"></div>
<div style="left:892px;top:71px;width:39px;height:21px;background:#007ACC;"></div>
<div class="t" style="left:895.97px;top:72px;font-size:12px;color:#FFFFFF;transform:scaleX(0.9676);">Solution Explorer</div>
<div style="left:892px;top:92px;width:39px;height:28px;background:#EEEEF2;"></div>
<svg style="position:absolute;left:901px;top:99px;" width="13" height="13" viewBox="0 0 13 13"><circle cx="6.5" cy="6.5" r="6" fill="#C5C5C5"/><path d="M3 6.5 L6.5 3 V5.3 H10 V7.7 H6.5 V10 Z" fill="#fff"/></svg>
<svg style="position:absolute;left:923px;top:99px;" width="13" height="13" viewBox="0 0 13 13"><circle cx="6.5" cy="6.5" r="6" fill="#C5C5C5"/><path d="M10 6.5 L6.5 3 V5.3 H3 V7.7 H6.5 V10 Z" fill="#fff"/></svg>
<div style="left:892px;top:120px;width:39px;height:20px;background:#FFFFFF;border-bottom:1px solid #CCCEDB;border-top:1px solid #CCCEDB;box-sizing:border-box"></div>
<div class="t" style="left:896.91px;top:121px;font-size:12px;color:#717171;transform:scaleX(0.8940);">Search Solution Explorer</div>
<svg style="position:absolute;left:907px;top:146px;" width="15" height="13" viewBox="0 0 15 13"><path d="M1 0.5 H13.5 V12.5 H9 M1 0.5 V5" fill="none" stroke="#1E1E1E" stroke-width="1"/><rect x="1" y="0.5" width="12.5" height="1.5" fill="#1E1E1E"/><path d="M0 6 L2 5 L5 8 L8 5.5 L9 6 V12 L8 12.5 L5 10 L2 13 L0 12 Z" fill="#865FC5"/></svg>
<div class="t" style="left:926.98px;top:143.5px;font-size:12px;color:#1E1E1E;transform:scaleX(0.9515);">Solution</div>
<div style="left:892px;top:161px;width:39px;height:18px;background:#007ACC;"></div>
<svg style="position:absolute;left:903px;top:165px;" width="6" height="10" viewBox="0 0 6 10"><path d="M0.8 0.8 L5 5 L0.8 9.2 Z" fill="none" stroke="#FFFFFF" stroke-width="1.3"/></svg>
<svg style="position:absolute;left:924px;top:163px;" width="8" height="15" viewBox="0 0 8 15"><rect x="1" y="1" width="7" height="3" fill="#FFFFFF"/><circle cx="5.5" cy="9.5" r="4.6" fill="#FFFFFF"/><path d="M1 8 H10 M1 11 H10 M4 5 V14 M7 5 V14" stroke="#007ACC" stroke-width="0.9"/></svg>
<svg style="position:absolute;left:903px;top:183px;" width="6" height="10" viewBox="0 0 6 10"><path d="M0.8 0.8 L5 5 L0.8 9.2 Z" fill="none" stroke="#1E1E1E" stroke-width="1.3"/></svg>
<svg style="position:absolute;left:924px;top:181px;" width="8" height="15" viewBox="0 0 8 15"><rect x="1" y="1" width="7" height="3" fill="#1E1E1E"/><circle cx="5.5" cy="9.5" r="4.6" fill="#1BA1E2"/><path d="M1 8 H10 M1 11 H10 M4 5 V14 M7 5 V14" stroke="#FFFFFF" stroke-width="0.9"/></svg>
<svg style="position:absolute;left:903px;top:201px;" width="6" height="10" viewBox="0 0 6 10"><path d="M0.8 0.8 L5 5 L0.8 9.2 Z" fill="none" stroke="#1E1E1E" stroke-width="1.3"/></svg>
<svg style="position:absolute;left:924px;top:199px;" width="8" height="15" viewBox="0 0 8 15"><rect x="1" y="1" width="7" height="3" fill="#1E1E1E"/><circle cx="5.5" cy="9.5" r="4.6" fill="#1BA1E2"/><path d="M1 8 H10 M1 11 H10 M4 5 V14 M7 5 V14" stroke="#FFFFFF" stroke-width="0.9"/></svg>
<svg style="position:absolute;left:903px;top:219px;" width="6" height="10" viewBox="0 0 6 10"><path d="M0.8 0.8 L5 5 L0.8 9.2 Z" fill="none" stroke="#1E1E1E" stroke-width="1.3"/></svg>
<svg style="position:absolute;left:924px;top:217px;" width="8" height="15" viewBox="0 0 8 15"><rect x="1" y="1" width="7" height="3" fill="#1E1E1E"/><circle cx="5.5" cy="9.5" r="4.6" fill="#1BA1E2"/><path d="M1 8 H10 M1 11 H10 M4 5 V14 M7 5 V14" stroke="#FFFFFF" stroke-width="0.9"/></svg>
<div class="t" style="left:896.46px;top:686px;font-size:12px;color:#1C6FB5;transform:scaleX(0.9930);">Solution Explorer</div>
<div style="left:930px;top:0px;width:345px;height:737px;background:#F6F6F6;border-left:1px solid #CCCEDB;box-sizing:border-box"></div>
<div class="t" style="left:964.70px;top:-11px;font-size:12px;color:#1E1E1E;transform:scaleX(0.9140);">Pack</div>
<div class="t" style="left:964.62px;top:11px;font-size:12px;color:#1E1E1E;transform:scaleX(0.9941);">Publish...</div>
<svg style="position:absolute;left:932px;top:9px;" width="28" height="22" viewBox="0 0 28 22"><circle cx="11.8" cy="10.8" r="5.9" fill="#3DA6E4"/><path d="M6 9 H17.6 M6 12.6 H17.6" stroke="#fff" stroke-width="1"/><path d="M10 5 V16.6 M13.6 5 V16.6" stroke="#fff" stroke-width="1"/><path d="M16.2 14 C17.5 12.5 18 10.5 17.8 9" fill="none" stroke="#F6F6F6" stroke-width="3"/><path d="M15.8 14.5 C17 13 17.6 11.5 17.6 9.5" fill="none" stroke="#1E7EC8" stroke-width="1.6"/><path d="M15.3 10.3 L17.7 7.2 L20 10.3 Z" fill="#1E7EC8"/></svg>
<div class="t" style="left:964.98px;top:33px;font-size:12px;color:#1E1E1E;transform:scaleX(1.0116);">Configure Application Insights...</div>
<svg style="position:absolute;left:932px;top:31px;" width="28" height="22" viewBox="0 0 28 22"><path d="M6 6.7 H12 M9 3.7 V9.7" stroke="#388A34" stroke-width="2.2"/><circle cx="16.5" cy="7.3" r="4.6" fill="#68217A"/><path d="M13.5 9 L14.8 13 H18.2 L19.5 9 Z" fill="#68217A"/><path d="M14.5 14.6 H18.5 M14.8 16.8 H18.2" stroke="#68217A" stroke-width="1.3"/><path d="M14.8 6 H18.2 M15.8 6 V10 M17.2 6 V10" stroke="#D8B8E8" stroke-width="0.9"/></svg>
<div style="left:961px;top:55px;width:314px;height:1px;background:#E0E3E6;"></div>
<div class="t" style="left:965.05px;top:60px;font-size:12px;color:#1E1E1E;transform:scaleX(0.9703);">Overview</div>
<div style="left:961px;top:82px;width:314px;height:1px;background:#E0E3E6;"></div>
<div class="t" style="left:965.08px;top:87px;font-size:12px;color:#1E1E1E;transform:scaleX(0.9587);">Scope to This</div>
<div class="t" style="left:964.63px;top:109px;font-size:12px;color:#1E1E1E;transform:scaleX(0.9816);">New Solution Explorer View</div>
<svg style="position:absolute;left:932px;top:107px;" width="28" height="22" viewBox="0 0 28 22"><rect x="10.6" y="4.4" width="9.6" height="9.6" fill="#F6F6F6" stroke="#1E1E1E" stroke-width="1.2"/><rect x="10" y="3.9" width="10.7" height="2" fill="#1E1E1E"/><rect x="6.6" y="8.4" width="9.6" height="9.4" fill="#F6F6F6" stroke="#1E1E1E" stroke-width="1.2"/><rect x="6" y="7.9" width="10.7" height="2" fill="#1E1E1E"/><path d="M8.5 12 H9.5 M11 12 H14.5 M8.5 15 H9.5 M11 15 H14.5 M18 8 V9 M18 10.5 V11.5" stroke="#1E1E1E" stroke-width="1.1"/></svg>
<div class="t" style="left:964.63px;top:131px;font-size:12px;color:#1E1E1E;transform:scaleX(0.9903);">File Nesting</div>
<svg style="position:absolute;left:1265px;top:136px;" width="5" height="8" viewBox="0 0 5 8"><path d="M0 0 L4 4 L0 8 Z" fill="#717171"/></svg>
<div style="left:961px;top:153px;width:314px;height:1px;background:#E0E3E6;"></div>
<div style="left:933px;top:156px;width:342px;height:22px;background:#C9DEF5;"></div>
<div class="t" style="left:964.64px;top:158px;font-size:12px;color:#1E1E1E;transform:scaleX(0.9744);">Edit Project File</div>
<svg style="position:absolute;left:932px;top:156px;" width="28" height="22" viewBox="0 0 28 22"><path d="M15 8.3 C11 8.3 7.4 9.2 7.4 12 C7.4 14 8.6 15.5 10.2 16.4" fill="none" stroke="#00539C" stroke-width="2.5"/><path d="M14.3 4 L20.3 8.3 L14.3 12.7 Z" fill="#00539C"/></svg>
<div style="left:961px;top:180px;width:314px;height:1px;background:#E0E3E6;"></div>
<div class="t" style="left:964.63px;top:185px;font-size:12px;color:#1E1E1E;transform:scaleX(0.9808);">Build Dependencies</div>
<svg style="position:absolute;left:1265px;top:190px;" width="5" height="8" viewBox="0 0 5 8"><path d="M0 0 L4 4 L0 8 Z" fill="#717171"/></svg>
<div style="left:961px;top:207px;width:314px;height:1px;background:#E0E3E6;"></div>
<div class="t" style="left:965.58px;top:212px;font-size:12px;color:#1E1E1E;transform:scaleX(1.0314);">Add</div>
<svg style="position:absolute;left:1265px;top:217px;" width="5" height="8" viewBox="0 0 5 8"><path d="M0 0 L4 4 L0 8 Z" fill="#717171"/></svg>
<div class="t" style="left:964.65px;top:234px;font-size:12px;color:#1E1E1E;transform:scaleX(0.9633);">Manage NuGet Packages...</div>
<svg style="position:absolute;left:932px;top:232px;" width="28" height="22" viewBox="0 0 28 22"><rect x="8.6" y="7" width="11.7" height="10.8" rx="2" fill="#00539C"/><circle cx="16.5" cy="14" r="2.4" fill="#fff"/><circle cx="11.6" cy="9.8" r="1.2" fill="#3C8BD0"/><path d="M7.5 3.8 V6.2 M6.3 5 H8.7" stroke="#00539C" stroke-width="0.9"/></svg>
<div class="t" style="left:964.64px;top:256px;font-size:12px;color:#1E1E1E;transform:scaleX(0.9762);">Manage Client-Side Libraries...</div>
<svg style="position:absolute;left:932px;top:254px;" width="28" height="22" viewBox="0 0 28 22"><circle cx="13.8" cy="9.5" r="5.2" fill="none" stroke="#424242" stroke-width="1"/><path d="M8.6 8 H19 M8.6 11 H19 M13.8 4.3 C11.3 7 11.3 12 13.8 14.7 M13.8 4.3 C16.3 7 16.3 12 13.8 14.7" fill="none" stroke="#424242" stroke-width="0.9"/><rect x="6.5" y="10.5" width="7.5" height="7" fill="#F6F6F6"/><path d="M7.5 17 V11.5 H12.5 V17 Z" fill="none" stroke="#D65A28" stroke-width="1.3"/><path d="M9 13.5 H11" stroke="#D65A28" stroke-width="1"/></svg>
<div class="t" style="left:964.67px;top:278px;font-size:12px;color:#1E1E1E;transform:scaleX(0.9439);">Manage User Secrets</div>
<div class="t" style="left:964.66px;top:300px;font-size:12px;color:#1E1E1E;transform:scaleX(0.9506);">Remove Unused References...</div>
<div style="left:961px;top:322px;width:314px;height:1px;background:#E0E3E6;"></div>
<div class="t" style="left:965.08px;top:327px;font-size:12px;color:#1E1E1E;transform:scaleX(0.9501);">Set as Startup Project</div>
<svg style="position:absolute;left:932px;top:325px;" width="28" height="22" viewBox="0 0 28 22"><g transform="translate(13,11)"><circle r="5" fill="#424242"/><rect x="-1.6" y="-7" width="3.2" height="3.5" fill="#424242" transform="rotate(0)"/><rect x="-1.6" y="-7" width="3.2" height="3.5" fill="#424242" transform="rotate(45)"/><rect x="-1.6" y="-7" width="3.2" height="3.5" fill="#424242" transform="rotate(90)"/><rect x="-1.6" y="-7" width="3.2" height="3.5" fill="#424242" transform="rotate(135)"/><rect x="-1.6" y="-7" width="3.2" height="3.5" fill="#424242" transform="rotate(180)"/><rect x="-1.6" y="-7" width="3.2" height="3.5" fill="#424242" transform="rotate(225)"/><rect x="-1.6" y="-7" width="3.2" height="3.5" fill="#424242" transform="rotate(270)"/><rect x="-1.6" y="-7" width="3.2" height="3.5" fill="#424242" transform="rotate(315)"/><circle r="2.1" fill="#F6F6F6"/></g></svg>
<div class="t" style="left:964.60px;top:349px;font-size:12px;color:#1E1E1E;transform:scaleX(1.0118);">Debug</div>
<svg style="position:absolute;left:1265px;top:354px;" width="5" height="8" viewBox="0 0 5 8"><path d="M0 0 L4 4 L0 8 Z" fill="#717171"/></svg>
<div style="left:961px;top:371px;width:314px;height:1px;background:#E0E3E6;"></div>
<div class="t" style="left:965.06px;top:376px;font-size:12px;color:#1E1E1E;transform:scaleX(0.9899);">Source Control</div>
<svg style="position:absolute;left:1265px;top:381px;" width="5" height="8" viewBox="0 0 5 8"><path d="M0 0 L4 4 L0 8 Z" fill="#717171"/></svg>
<div style="left:961px;top:398px;width:314px;height:1px;background:#E0E3E6;"></div>
<div class="t" style="left:964.99px;top:403px;font-size:12px;color:#1E1E1E;transform:scaleX(1.0013);">Cut</div>
<svg style="position:absolute;left:932px;top:401px;" width="28" height="22" viewBox="0 0 28 22"><path d="M9 4 L12.8 12.5 M17 4 L13.2 12.5" stroke="#424242" stroke-width="1.7"/><circle cx="10.5" cy="15" r="2.3" fill="#F6F6F6" stroke="#424242" stroke-width="1.2"/><circle cx="16" cy="15" r="2.3" fill="#F6F6F6" stroke="#424242" stroke-width="1.2"/></svg>
<div class="t" style="left:1208.78px;top:403px;font-size:12px;color:#1E1E1E;transform:scaleX(1.0240);">Ctrl+X</div>
<div class="t" style="left:964.63px;top:425px;font-size:12px;color:#1E1E1E;transform:scaleX(0.9869);">Remove</div>
<svg style="position:absolute;left:932px;top:423px;" width="28" height="22" viewBox="0 0 28 22"><path d="M7.8 5.3 L18.5 16.3 M18.5 5.3 L7.8 16.3" stroke="#A1260D" stroke-width="2.3"/></svg>
<div class="t" style="left:1208.40px;top:425px;font-size:12px;color:#1E1E1E;transform:scaleX(1.0173);">Del</div>
<div class="t" style="left:964.64px;top:447px;font-size:12px;color:#1E1E1E;transform:scaleX(0.9717);">Rename</div>
<svg style="position:absolute;left:932px;top:445px;" width="28" height="22" viewBox="0 0 28 22"><rect x="6.5" y="6.3" width="13" height="9" fill="#F6F6F6" stroke="#424242" stroke-width="1.1"/><rect x="11.5" y="8" width="6.5" height="6" fill="#E6E6E6"/><path d="M8.8 8.3 H10.8 M9.8 8.3 V13.5 M8.8 13.5 H10.8" stroke="#424242" stroke-width="0.8"/></svg>
<div class="t" style="left:1208.46px;top:447px;font-size:12px;color:#1E1E1E;transform:scaleX(0.9504);">F2</div>
<div style="left:961px;top:469px;width:314px;height:1px;background:#E0E3E6;"></div>
<div class="t" style="left:964.68px;top:474px;font-size:12px;color:#1E1E1E;transform:scaleX(0.9936);">Unload Project</div>
<div class="t" style="left:964.64px;top:496px;font-size:12px;color:#1E1E1E;transform:scaleX(0.9785);">Load Direct Dependencies of Project</div>
<div class="t" style="left:964.65px;top:518px;font-size:12px;color:#1E1E1E;transform:scaleX(0.9622);">Load Entire Dependency Tree of Project</div>
<div style="left:961px;top:540px;width:314px;height:1px;background:#E0E3E6;"></div>
<div class="t" style="left:964.67px;top:545px;font-size:12px;color:#1E1E1E;transform:scaleX(0.9482);">Find Code Issues</div>
<div class="t" style="left:964.63px;top:567px;font-size:12px;color:#1E1E1E;transform:scaleX(0.9871);">Find Dependent Code (all projects)</div>
<svg style="position:absolute;left:932px;top:565px;" width="28" height="22" viewBox="0 0 28 22"><rect x="6.1" y="4.3" width="4.5" height="2.3" fill="#1E1E1E"/><path d="M7.8 7 V11.8 H10" fill="none" stroke="#00539C" stroke-width="1.5"/><path d="M9.5 9.3 L12.6 11.8 L9.5 14.3 Z" fill="#00539C"/><path d="M15.2 6.2 C13.8 8.5 13.8 15.5 15.2 17.8" fill="none" stroke="#424242" stroke-width="1"/><path d="M16.5 8.6 H20 M16.5 12 H20 M16.5 15.3 H20" stroke="#1E1E1E" stroke-width="1.5"/></svg>
<div style="left:961px;top:589px;width:314px;height:1px;background:#E0E3E6;"></div>
<div class="t" style="left:965.00px;top:594px;font-size:12px;color:#1E1E1E;transform:scaleX(0.9817);">Copy Full Path</div>
<svg style="position:absolute;left:932px;top:592px;" width="28" height="22" viewBox="0 0 28 22"><path d="M11.5 7.5 V4.5 H18.6 V13.1 H15.5" fill="none" stroke="#424242" stroke-width="1.1"/><rect x="7.3" y="8.3" width="7.4" height="8.8" fill="#EAEAEA" stroke="#424242" stroke-width="1.1"/></svg>
<div class="t" style="left:965.05px;top:616px;font-size:12px;color:#1E1E1E;transform:scaleX(0.9685);">Open Folder in File Explorer</div>
<svg style="position:absolute;left:932px;top:614px;" width="28" height="22" viewBox="0 0 28 22"><path d="M15 8.3 C11 8.3 7.4 9.2 7.4 12 C7.4 14 8.6 15.5 10.2 16.4" fill="none" stroke="#00539C" stroke-width="2.5"/><path d="M14.3 4 L20.3 8.3 L14.3 12.7 Z" fill="#00539C"/></svg>
<div class="t" style="left:965.04px;top:638px;font-size:12px;color:#1E1E1E;transform:scaleX(0.9849);">Open in Terminal</div>
<svg style="position:absolute;left:932px;top:636px;" width="28" height="22" viewBox="0 0 28 22"><rect x="6.5" y="5.5" width="13" height="11" fill="#F6F6F6" stroke="#424242" stroke-width="1.1"/><path d="M6.5 8.5 H19.5" stroke="#424242" stroke-width="1"/><path d="M8.5 10.3 L10.8 12 L8.5 13.7 M11 14.3 H13.5" fill="none" stroke="#424242" stroke-width="1"/></svg>
<div style="left:961px;top:660px;width:314px;height:1px;background:#E0E3E6;"></div>
<div class="t" style="left:965.07px;top:665px;font-size:12px;color:#1E1E1E;transform:scaleX(0.9669);">Show Type Dependency Diagram</div>
<svg style="position:absolute;left:932px;top:663px;" width="28" height="22" viewBox="0 0 28 22"><rect x="7" y="5" width="13" height="3.4" fill="#1E1E1E"/><rect x="11.2" y="5" width="5.2" height="11.5" fill="#1E1E1E"/><rect x="13.5" y="4.6" width="0.8" height="1.6" fill="#F6F6F6"/></svg>
<div class="t" style="left:965.07px;top:687px;font-size:12px;color:#1E1E1E;transform:scaleX(0.9801);">Show Project Dependency Diagram</div>
<div class="t" style="left:965.07px;top:709px;font-size:12px;color:#1E1E1E;transform:scaleX(0.9791);">Show Project Hierarchy</div>
<div style="left:961px;top:731px;width:314px;height:1px;background:#E0E3E6;"></div>
</body></html>
